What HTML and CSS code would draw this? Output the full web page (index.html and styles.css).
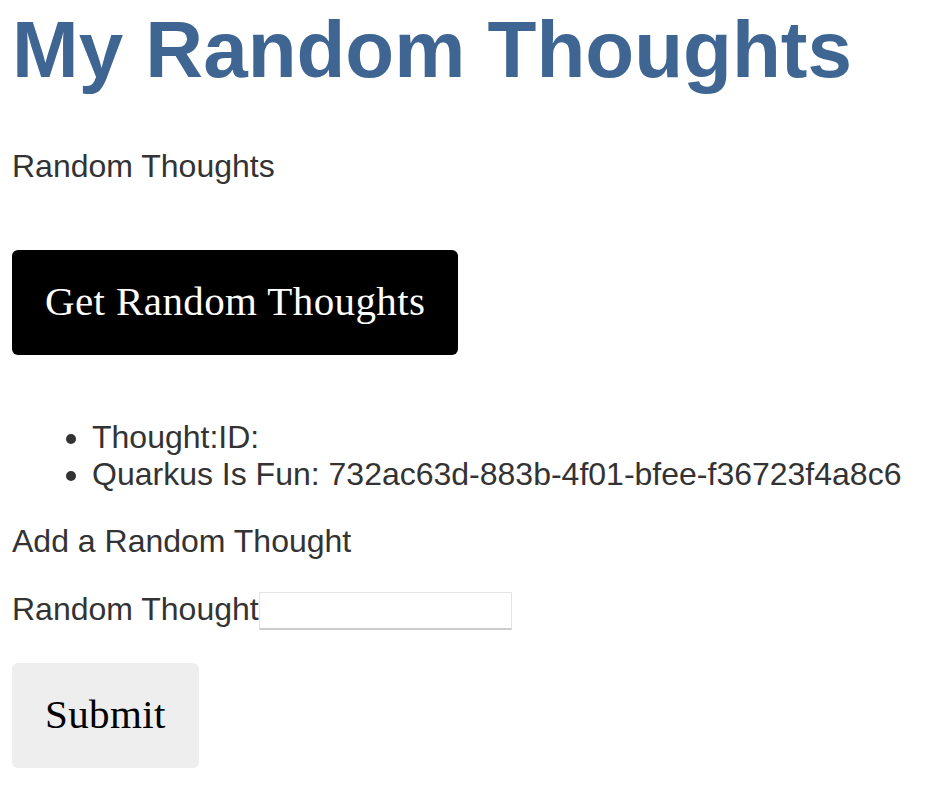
FILE: index.html
```html
<!DOCTYPE html>
<html lang="en">
<head>
<meta charset="utf-8">
<title>My Random Thoughts</title>
<link rel="stylesheet" href="styles.css">
</head>
<body>
<main class="page">
  <h1 class="title">My Random Thoughts</h1>
  <p class="section-label">Random Thoughts</p>
  <button class="btn btn-dark" type="button">Get Random Thoughts</button>
  <ul class="thoughts">
    <li>Thought:ID:</li>
    <li>Quarkus Is Fun: 732ac63d-883b-4f01-bfee-f36723f4a8c6</li>
  </ul>
  <p class="section-label add-label">Add a Random Thought</p>
  <form class="thought-form">
    <div class="field-row">
      <label class="field-label" for="thought">Random Thought</label>
      <input class="field-input" id="thought" type="text">
    </div>
    <button class="btn btn-light" type="button">Submit</button>
  </form>
</main>
</body>
</html>
```
FILE: styles.css
```css
html, body {
  margin: 0;
  padding: 0;
  background: #ffffff;
}

.page {
  padding: 0 0 0 12px;
  font-family: "Liberation Sans", Arial, Helvetica, sans-serif;
  font-size: 32px;
  color: #333333;
}

.title {
  margin: 0;
  padding-top: 4px;
  font-size: 80px;
  line-height: 92px;
  font-weight: bold;
  color: #3f6593;
}

.section-label {
  margin: 52px 0 0;
  line-height: 37px;
}

.btn {
  display: block;
  border: none;
  border-radius: 6px;
  font-family: "Liberation Serif", Georgia, "Times New Roman", serif;
  font-size: 41px;
  letter-spacing: 0.4px;
  line-height: 47px;
  padding: 28px 33px 30px;
  cursor: pointer;
}

.btn-dark {
  margin-top: 65px;
  background: #000000;
  color: #ffffff;
}

.btn-light {
  margin-top: 33px;
  background: #eeeeee;
  color: #000000;
}

.thoughts {
  margin: 64px 0 0;
  padding: 0 0 0 80px;
  line-height: 36.5px;
}

.add-label {
  margin-top: 31px;
}

.thought-form {
  margin: 31px 0 0;
}

.field-row {
  display: flex;
  align-items: flex-start;
}

.field-label {
  line-height: 37px;
}

.field-input {
  box-sizing: border-box;
  width: 253px;
  height: 38px;
  margin: 1px 0 0;
  border: 1px solid #e4e4e4;
  border-bottom: 2px solid #cccccc;
  background: #ffffff;
  font-size: 16px;
  padding: 0 4px;
}
```
